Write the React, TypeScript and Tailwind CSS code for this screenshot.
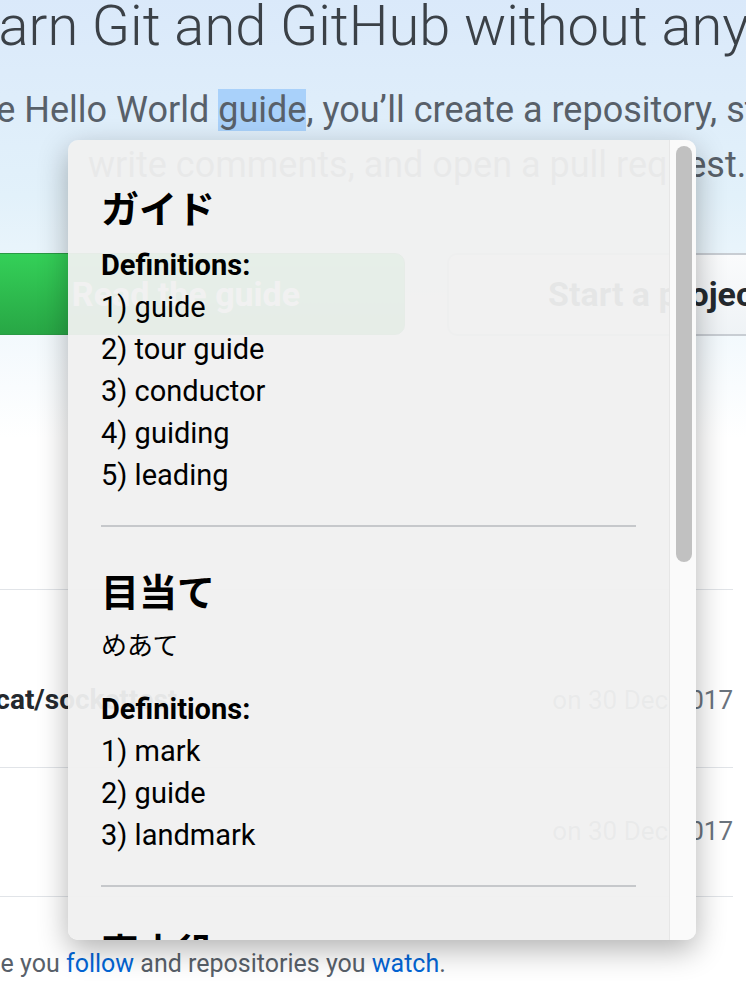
import React from 'react';

const entries = [
  {
    word: 'ガイド',
    defs: ['guide', 'tour guide', 'conductor', 'guiding', 'leading'],
  },
  {
    word: '目当て',
    reading: 'めあて',
    defs: ['mark', 'guide', 'landmark'],
  },
];

function DictionaryPopup() {
  return (
    <div className="absolute left-[68px] top-[140px] flex h-[800px] w-[628px] overflow-hidden rounded-[10px] bg-[#f0f0f0]/95 shadow-[0_10px_30px_rgba(0,0,0,0.3)] font-['Roboto','Noto_Sans_CJK_JP',sans-serif] text-black">
      <div className="flex-1 overflow-hidden px-[33px] pt-[48px]">
        {entries.map((entry, i) => (
          <div key={entry.word} className={i > 0 ? 'mt-[44px]' : ''}>
            <h2 className="text-[38px] font-bold leading-[44px]">{entry.word}</h2>
            {entry.reading && (
              <div className="mt-[10px] text-[26px] leading-[42px]">{entry.reading}</div>
            )}
            <div className={`${entry.reading ? 'mt-[21px]' : 'mt-[12px]'} text-[29px] font-bold leading-[42px]`}>
              Definitions:
            </div>
            <ol>
              {entry.defs.map((d, n) => (
                <li key={d} className="text-[29px] leading-[42px]">
                  {n + 1}) {d}
                </li>
              ))}
            </ol>
            <hr className="mt-[29px] h-[2px] border-0 bg-[#c6c8cb]" />
          </div>
        ))}
        <h2 className="mt-[44px] text-[38px] font-bold leading-[44px]">案内役</h2>
      </div>
      <div className="w-[27px] shrink-0 border-l border-[#e6e6e6] bg-[#fafafa] pl-[6px] pr-[4px] pt-[6px]">
        <div className="h-[416px] rounded-full bg-[#c1c1c1]" />
      </div>
    </div>
  );
}

export default function App() {
  return (
    <div className="relative h-[998px] w-[746px] overflow-hidden bg-white font-['Roboto','Liberation_Sans',sans-serif]">
      <section className="h-[440px] bg-[linear-gradient(180deg,#dae9fa_0%,#e2f1fa_45%,#ffffff_100%)]">
        <h1 className="ml-[-60px] mt-[-2px] whitespace-nowrap text-[56px] font-light leading-[56px] text-[#3b4147]">
          Learn Git and GitHub without any code!
        </h1>
        <p className="mt-[29px] whitespace-nowrap text-[36px] leading-[55px] text-[#586069]">
          <span className="ml-[-135px]">
            Using the Hello World <span className="bg-[#a9d1fa]">guide</span>, you’ll create a repository, start a branch,
          </span>
          <br />
          <span className="ml-[88px]">write comments, and open a pull request.</span>
        </p>
        <div className="mt-[60px] flex gap-[42px]">
          <button className="ml-[-33px] h-[82px] w-[438px] shrink-0 rounded-[10px] border border-[#2a9a45] bg-linear-to-b from-[#34d058] to-[#28a745] text-[34px] font-bold text-white">
            Read the guide
          </button>
          <button className="h-[83px] w-[420px] shrink-0 rounded-[10px] border-2 border-[#c8cdd3] bg-linear-to-b from-[#fafbfc] to-[#eff3f6] pl-[99px] text-left text-[34px] font-bold text-[#24292e]">
            Start a project
          </button>
        </div>
      </section>

      <div className="mr-[13px] mt-[151px] border-t border-[#e1e4e8]">
        <div className="flex h-[177px] items-start justify-between pt-[90px] text-[26px] leading-[40px]">
          <span className="ml-[-60px] text-[28px] font-bold text-[#24292e]">octocat/sockettest</span>
          <span className="text-[#6a737d]">on 30 Dec 2017</span>
        </div>
        <div className="flex h-[129px] justify-end border-t border-[#e1e4e8] pt-[43px] text-[26px] leading-[40px] text-[#6a737d]">
          on 30 Dec 2017
        </div>
        <div className="whitespace-nowrap border-t border-[#e1e4e8] pt-[47px] text-[25px] leading-[40px] text-[#586069]">
          <span className="ml-[-317px]">
            Your news feed shows people you <span className="text-[#0366d6]">follow</span> and repositories you{' '}
            <span className="text-[#0366d6]">watch</span>.
          </span>
        </div>
      </div>

      <DictionaryPopup />
    </div>
  );
}
